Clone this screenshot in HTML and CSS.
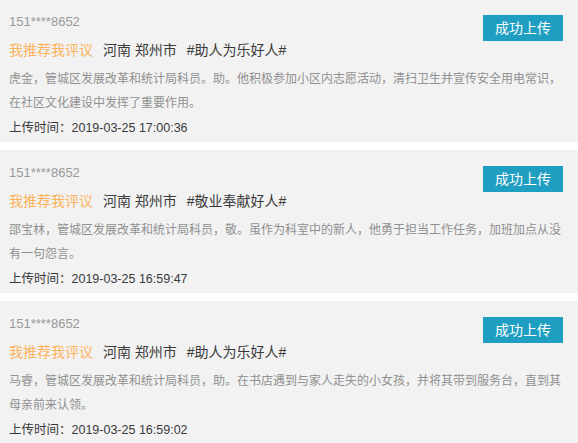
FILE: index.html
```html
<!DOCTYPE html>
<html lang="zh-CN">
<head>
    <meta charset="UTF-8">
    <meta name="viewport" content="width=device-width, initial-scale=1.0">
    <title>上传记录</title>
    <link rel="stylesheet" href="styles.css">
</head>
<body>
    <div class="record-list">
        <div class="record">
            <div class="record-phone">151****8652</div>
            <div class="record-status">成功上传</div>
            <div class="record-tags">
                <span class="tag-source">我推荐我评议</span>
                <span class="tag-area">河南 郑州市</span>
                <span class="tag-topic">#助人为乐好人#</span>
            </div>
            <p class="record-desc">虎金，管城区发展改革和统计局科员。助。他积极参加小区内志愿活动，清扫卫生并宣传安全用电常识，在社区文化建设中发挥了重要作用。</p>
            <div class="record-time">上传时间：2019-03-25 17:00:36</div>
        </div>

        <div class="record">
            <div class="record-phone">151****8652</div>
            <div class="record-status">成功上传</div>
            <div class="record-tags">
                <span class="tag-source">我推荐我评议</span>
                <span class="tag-area">河南 郑州市</span>
                <span class="tag-topic">#敬业奉献好人#</span>
            </div>
            <p class="record-desc">邵宝林，管城区发展改革和统计局科员，敬。虽作为科室中的新人，他勇于担当工作任务，加班加点从没有一句怨言。</p>
            <div class="record-time">上传时间：2019-03-25 16:59:47</div>
        </div>

        <div class="record">
            <div class="record-phone">151****8652</div>
            <div class="record-status">成功上传</div>
            <div class="record-tags">
                <span class="tag-source">我推荐我评议</span>
                <span class="tag-area">河南 郑州市</span>
                <span class="tag-topic">#助人为乐好人#</span>
            </div>
            <p class="record-desc">马睿，管城区发展改革和统计局科员，助。在书店遇到与家人走失的小女孩，并将其带到服务台，直到其母亲前来认领。</p>
            <div class="record-time">上传时间：2019-03-25 16:59:02</div>
        </div>
    </div>
</body>
</html>
```

FILE: styles.css
```css
:root {
    --card-bg: #f2f2f2;
    --text-dark: #3a3a3a;
    --text-gray: #999;
    --desc-gray: #909090;
    --orange: #fcb35b;
    --blue: #1e9ec1;
}

body {
    margin: 0;
    background: #fff;
    font-family: "Liberation Sans", "Noto Sans CJK SC", sans-serif;
    color: var(--text-dark);
}

.record-list {
    display: flex;
    flex-direction: column;
    gap: 8px;
    margin-top: -1px; /* list is scrolled by a pixel */
}

.record {
    display: grid;
    grid-template-columns: 1fr auto;
    height: 143px;
    box-sizing: border-box;
    padding: 11px 15px 0 9px;
    background: var(--card-bg);
}

.record-phone {
    grid-column: 1;
    grid-row: 1;
    font-size: 13px;
    line-height: 24px;
    color: var(--text-gray);
}

.record-status {
    grid-column: 2;
    grid-row: 1 / 3;
    align-self: start;
    margin-top: 5px;
    padding: 0 12px;
    height: 26px;
    line-height: 26px;
    font-size: 14px;
    color: #fff;
    background: var(--blue);
}

.record-tags {
    grid-column: 1;
    grid-row: 2;
    font-size: 14px;
    line-height: 27px;
}

.tag-source {
    color: var(--orange);
    margin-right: 6px;
}

.tag-area {
    margin-right: 6px;
}

.record-desc {
    grid-column: 1 / 3;
    margin: 0;
    font-size: 12px;
    line-height: 24px;
    color: var(--desc-gray);
}

.record-time {
    grid-column: 1 / 3;
    font-size: 12.5px;
    line-height: 22px;
}
```
